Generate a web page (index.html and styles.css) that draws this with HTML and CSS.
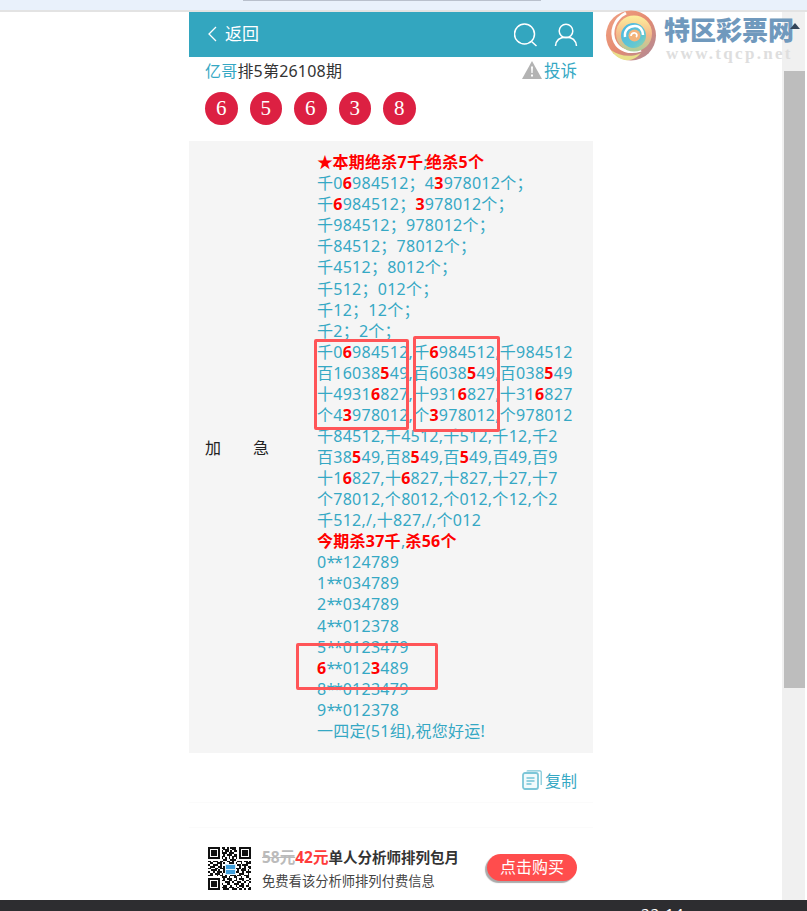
FILE: index.html
```html
<!DOCTYPE html>
<html lang="zh-CN">
	<head>
		<meta charset="utf-8">
		<title>亿哥排5第26108期</title>
		<link rel="stylesheet" href="styles.css">
	</head>
	<body>
		<div class="browser-top"><div class="address-edge"></div></div>

		<div class="window">
			<div class="viewport">
				<div class="column">
					<header class="nav">
						<a class="nav-back">
							<svg class="nav-chevron" viewBox="0 0 10 16"><path d="M9 1 2 8l7 7"/></svg>
							返回
						</a>
						<div class="nav-icons">
							<svg class="nav-icon" viewBox="0 0 24 24"><circle cx="10.5" cy="11" r="10"/><path d="m17.5 18.5 5 4.5"/></svg>
							<svg class="nav-icon" viewBox="0 0 24 24"><circle cx="12" cy="8" r="6.8"/><path d="M1.5 23c.5-6 5-8.8 10.500-8.800S22 17 22.500 23"/></svg>
						</div>
					</header>

					<div class="title-row">
						<div class="title"><span class="teal">亿哥</span>排5第26108期</div>
						<a class="report">
							<svg class="report-icon" viewBox="0 0 20 18"><path d="M10 0 20 18H0z"/><path class="report-mark" d="M9 5.500h2L10.600 12H9.400zM9 13.500h2v2H9z"/></svg>
							投诉
						</a>
					</div>

					<div class="balls">
						<span class="ball">6</span>
						<span class="ball">5</span>
						<span class="ball">6</span>
						<span class="ball">3</span>
						<span class="ball">8</span>
					</div>

					<section class="panel">
						<div class="panel-label">加　　急</div>
						<div class="panel-text">
							<b class="hot star">★</b><b class="hot">本期绝杀7千</b><small class="thin-semi">;</small><b class="hot">绝杀5个</b><br>
							千0<b class="hot">6</b>984512；4<b class="hot">3</b>978012个；<br>
							千<b class="hot">6</b>984512；<b class="hot">3</b>978012个；<br>
							千984512；978012个；<br>
							千84512；78012个；<br>
							千4512；8012个；<br>
							千512；012个；<br>
							千12；12个；<br>
							千2；2个；<br>
							千0<b class="hot">6</b>984512,千<b class="hot">6</b>984512,千984512<br>
							百16038<b class="hot">5</b>49,百6038<b class="hot">5</b>49,百038<b class="hot">5</b>49<br>
							十4931<b class="hot">6</b>827,十931<b class="hot">6</b>827,十31<b class="hot">6</b>827<br>
							个4<b class="hot">3</b>978012,个<b class="hot">3</b>978012,个978012<br>
							千84512,千4512,千512,千12,千2<br>
							百38<b class="hot">5</b>49,百8<b class="hot">5</b>49,百<b class="hot">5</b>49,百49,百9<br>
							十1<b class="hot">6</b>827,十<b class="hot">6</b>827,十827,十27,十7<br>
							个78012,个8012,个012,个12,个2<br>
							千512,/,十827,/,个012<br>
							<b class="hot">今期杀37千</b><small>,</small><b class="hot">杀56个</b><br>
							0<i class="stars">**</i>124789<br>
							1<i class="stars">**</i>034789<br>
							2<i class="stars">**</i>034789<br>
							4<i class="stars">**</i>012378<br>
							5<i class="stars">**</i>0123479<br>
							<b class="hot">6</b><i class="stars">**</i>012<b class="hot">3</b>489<br>
							8<i class="stars">**</i>0123479<br>
							9<i class="stars">**</i>012378<br>
							一四定(51组),祝您好运!
						</div>
						<div class="mark mark-a"></div>
						<div class="mark mark-b"></div>
						<div class="mark mark-c"></div>
					</section>

					<div class="copy-row">
						<a class="copy">
							<svg class="copy-icon" viewBox="0 0 20 20">
								<path class="copy-back" d="M5 1.500C5 1 5.500.8 6 .8h12c.8 0 1.200.5 1.200 1.200v13"/>
								<rect class="copy-page" x="1" y="3" width="15" height="16" rx="2"/>
								<path class="copy-lines" d="M4.500 8h8M4.500 11h8M4.500 14h5"/>
							</svg>
							复制
						</a>
					</div>
					<div class="rule"></div>

					<div class="promo">
						<svg class="qr" viewBox="0 0 25 25" shape-rendering="crispEdges">
							<path class="qr-finder" d="M0 0h7v7H0zM1 1v5h5V1zM18 0h7v7h-7zM19 1v5h5V1zM0 18h7v7H0zM1 19v5h5v-5z"/>
							<path class="qr-finder" d="M2 2h3v3H2zM20 2h3v3h-3zM2 20h3v3H2z"/>
							<path class="qr-bits" d="M8 .5h2M11 .5h1M13 .5h3M9 1.500h3M14 1.500h2M8 2.500h1M10 2.500h2M13 2.500h1M15 2.500h2M8 3.500h3M12 3.500h3M9 4.500h1M11 4.500h3M15 4.500h2M8 5.500h2M12 5.500h1M14 5.500h3M8 6.500h1M10 6.500h1M12 6.500h1M14 6.500h1M16 6.500h1M9 7.500h2M13 7.500h3M0 8.500h2M3 8.500h3M7 8.500h2M11 8.500h2M14 8.500h1M17 8.500h3M21 8.500h2M24 8.500h1M1 9.500h2M5 9.500h3M9 9.500h1M12 9.500h3M16 9.500h1M19 9.500h1M22 9.500h3M0 10.500h1M3 10.500h3M7 10.500h1M10 10.500h2M17 10.500h2M20 10.500h3M1 11.500h3M6 11.500h2M9 11.500h1M18 11.500h1M21 11.500h1M23 11.500h2M0 12.500h2M4 12.500h2M7 12.500h3M16 12.500h3M20 12.500h2M24 12.500h1M2 13.500h3M6 13.500h1M9 13.500h1M17 13.500h1M19 13.500h3M23 13.500h1M0 14.500h1M3 14.500h1M5 14.500h3M9 14.500h2M16 14.500h2M20 14.500h1M22 14.500h3M1 15.500h2M4 15.500h3M8 15.500h1M11 15.500h3M15 15.500h1M18 15.500h3M23 15.500h1M0 16.500h3M5 16.500h1M7 16.500h2M10 16.500h1M13 16.500h3M17 16.500h2M21 16.500h3M8 17.500h3M12 17.500h1M15 17.500h2M19 17.500h1M22 17.500h2M9 18.500h1M11 18.500h3M16 18.500h1M18 18.500h3M24 18.500h1M8 19.500h2M12 19.500h2M15 19.500h2M20 19.500h1M22 19.500h2M10 20.500h3M14 20.500h1M17 20.500h2M21 20.500h1M24 20.500h1M8 21.500h1M11 21.500h2M15 21.500h3M19 21.500h2M23 21.500h1M9 22.500h2M13 22.500h1M16 22.500h1M18 22.500h3M22 22.500h2M8 23.500h3M12 23.500h3M17 23.500h1M20 23.500h1M24 23.500h1M9 24.500h2M11 24.500h1M14 24.500h3M18 24.500h2M21 24.500h1M23 24.500h2"/>
							<rect class="qr-logo" x="10" y="10" width="6" height="6"/>
							<path class="qr-logo-line" d="M10.500 11.500h5M10.500 14.500h5"/>
						</svg>
						<div class="promo-text">
							<div class="promo-head"><s class="old-price">58元</s><span class="new-price">42元</span>单人分析师排列包月</div>
							<div class="promo-sub">免费看该分析师排列付费信息</div>
						</div>
						<a class="buy">点击购买</a>
					</div>
				</div>
			</div>

			<div class="scrollbar"><div class="scroll-thumb"></div></div>

			<div class="watermark">
				<svg class="swirl" viewBox="0 0 52 52">
					<defs>
						<linearGradient id="swirlOuter" x1="0" y1="0" x2="1" y2="1">
							<stop offset="0" stop-color="#f0a486"/>
							<stop offset=".5" stop-color="#e58a70"/>
							<stop offset="1" stop-color="#a98a9c"/>
						</linearGradient>
						<linearGradient id="swirlBand" x1="0" y1="0" x2="0" y2="1">
							<stop offset="0" stop-color="#fdf09c"/>
							<stop offset=".55" stop-color="#f5b98a"/>
							<stop offset="1" stop-color="#a9cf9a"/>
						</linearGradient>
						<linearGradient id="swirlCore" x1="0" y1="0" x2="1" y2="1">
							<stop offset="0" stop-color="#48b6e4"/>
							<stop offset=".7" stop-color="#63c7d2"/>
							<stop offset="1" stop-color="#9ed39a"/>
						</linearGradient>
					</defs>
					<circle cx="26" cy="25.500" r="25" fill="url(#swirlOuter)"/>
					<path d="M6 40c8 6 20 8 30 3-4 5-10 8-16 7-6-1-11-5-14-10z" fill="#e9e08a"/>
					<path class="swirl-gap" d="M21 3C9 9 5 22 10 32c4 8 14 12 26 8"/>
					<circle cx="29" cy="23.500" r="18" fill="url(#swirlBand)"/>
					<circle cx="28.500" cy="25.500" r="12.500" fill="url(#swirlCore)"/>
					<path class="swirl-arc" d="M20 27c-1-7 4-11 10-11 5 0 8 4 8 9"/>
					<circle cx="29.500" cy="25.500" r="6" fill="#f3b47c"/>
					<path class="swirl-hook" d="M26 26c0-2 2-3.500 4-3 2 .5 2.500 3 1 4"/>
				</svg>
				<div class="watermark-text">
					<div class="watermark-name">特区彩票网</div>
					<div class="watermark-url">www.tqcp.net</div>
				</div>
			</div>
			<div class="scroll-arrow"></div>
		</div>

		<footer class="taskbar"><span class="clock">22:14</span></footer>
	</body>
</html>
```

FILE: styles.css
```css
* {
	box-sizing: border-box;
}
html, body {
	margin: 0;
	height: 911px;
	overflow: hidden;
}
body {
	display: flex;
	flex-direction: column;
	background-color: #fff;
	font-family: "Noto Sans", "Noto Sans CJK SC", sans-serif;
	font-size: 16px;
	color: #333;
}
a {
	color: inherit;
	text-decoration: none;
}

/* browser chrome */
.browser-top {
	height: 12px;
	flex: none;
	background-color: #e9f1fb;
	border-bottom: 2px solid #e3e3e3;
	padding-left: 243px;
}
.address-edge {
	width: 298px;
	height: 1px;
	background-color: #b9c0cc;
}
.window {
	flex: 1;
	display: flex;
	position: relative;
	min-height: 0;
}
.viewport {
	flex: 1;
	display: flex;
	justify-content: center;
}
.scrollbar {
	flex: none;
	width: 25px;
	background-color: #f0f0f0;
	border-right: 2px solid #fff;
	padding: 59px 0 0 2px;
}
.scroll-thumb {
	height: 617px;
	background-color: #bdbdbd;
}
.scroll-arrow {
	position: absolute;
	top: 11px;
	right: 7px;
	border-left: 5.500px solid transparent;
	border-right: 5.500px solid transparent;
	border-bottom: 6px solid #34465a;
}
.taskbar {
	flex: none;
	height: 11px;
	background-color: #2d2d30;
	overflow: hidden;
	padding-left: 641px;
}
.clock {
	display: block;
	margin-top: 3px;
	font-size: 15px;
	line-height: 20px;
	letter-spacing: 1px;
	color: #fff;
}

/* page column */
.column {
	width: 404px;
}
.nav {
	height: 45px;
	background-color: #33a6bf;
	display: flex;
	align-items: center;
	justify-content: space-between;
	padding: 0 15px 0 18px;
	color: #fff;
}
.nav-back {
	display: flex;
	align-items: center;
	gap: 8px;
	font-size: 17px;
	line-height: 22px;
	padding-bottom: 2px;
}
.nav-chevron {
	width: 10px;
	height: 16px;
	fill: none;
	stroke: #fff;
	stroke-width: 1.300;
}
.nav-icons {
	display: flex;
	gap: 16px;
}
.nav-icon {
	width: 24px;
	height: 24px;
	fill: none;
	stroke: #fff;
	stroke-width: 1.500;
}
.title-row {
	height: 28px;
	display: flex;
	align-items: center;
	justify-content: space-between;
	padding: 0 16px 2px 16px;
}
.title {
	letter-spacing: .2px;
}
.teal {
	color: #35a8c4;
}
.report {
	display: flex;
	align-items: center;
	gap: 2px;
	font-size: 16.500px;
	color: #35a8c4;
}
.report-icon {
	width: 20px;
	height: 18px;
	fill: #b3b3b3;
}
.report-mark {
	fill: #fff;
}
.balls {
	display: flex;
	gap: 12px;
	padding: 7px 0 0 16px;
}
.ball {
	width: 32.500px;
	height: 33px;
	border-radius: 50%;
	background-color: #dc2042;
	color: #fff;
	font-family: "Liberation Serif", serif;
	font-size: 21px;
	line-height: 33px;
	text-align: center;
}
.panel {
	position: relative;
	display: flex;
	align-items: center;
	height: 612px;
	margin-top: 16px;
	background-color: #f5f5f5;
}
.panel-label {
	width: 128px;
	flex: none;
	padding-left: 16px;
	color: #222;
}
.panel-text {
	line-height: 21.060px;
	letter-spacing: .26px;
	color: #35a8c4;
	white-space: nowrap;
}
.panel-text small {
	font-size: 16px;
}
.panel-text .thin-semi {
	letter-spacing: -1.500px;
}
.star {
	letter-spacing: -2.500px;
	margin-right: 2px;
}
.stars {
	font-style: normal;
	letter-spacing: -1.200px;
	margin-right: 1px;
}
.hot {
	color: #f00;
	font-weight: 700;
}
.mark {
	position: absolute;
	border: 3px solid #ff5558;
	border-radius: 2px;
}
.mark-a {
	left: 125px;
	top: 198px;
	width: 95px;
	height: 91px;
}
.mark-b {
	left: 224px;
	top: 195px;
	width: 87px;
	height: 96px;
}
.mark-c {
	left: 107px;
	top: 502px;
	width: 142px;
	height: 47px;
}

/* below the panel */
.copy-row {
	height: 50px;
	display: flex;
	justify-content: flex-end;
	align-items: flex-end;
	padding: 0 16px 10px 0;
	border-bottom: 1px solid #fbfbfb;
}
.copy {
	display: flex;
	align-items: center;
	gap: 3px;
	color: #35a8c4;
}
.copy-icon {
	width: 20px;
	height: 20px;
	fill: none;
}
.copy-back {
	stroke: #7cc6d8;
	stroke-width: 1.200;
}
.copy-page {
	stroke: #7cc6d8;
	stroke-width: 1.800;
	fill: #f1fafc;
}
.copy-lines {
	stroke: #35a8c4;
	stroke-width: 1.200;
}
.rule {
	height: 25px;
	border-bottom: 1px solid #fbfbfb;
}
.promo {
	display: flex;
	align-items: center;
	padding: 18px 16px 0 19px;
}
.qr {
	width: 43px;
	height: 43px;
	flex: none;
	margin-right: 11px;
}
.qr-finder {
	fill: #111;
	fill-rule: evenodd;
}
.qr-bits {
	fill: none;
	stroke: #111;
	stroke-width: 1;
}
.qr-logo {
	fill: #d8eefa;
}
.qr-logo-line {
	stroke: #3f9fdc;
	stroke-width: 2;
}
.promo-text {
	flex: 1;
}
.promo-head {
	font-size: 14.500px;
	font-weight: 700;
	line-height: 22px;
	color: #333;
	white-space: nowrap;
}
.old-price {
	font-size: 15.500px;
	color: #bbb;
}
.new-price {
	font-size: 15.500px;
	color: #ff3b3b;
}
.promo-sub {
	margin-top: 3px;
	font-size: 13.300px;
	line-height: 20px;
	color: #444;
	white-space: nowrap;
}
.buy {
	width: 90px;
	height: 27px;
	margin-bottom: 2px;
	border-radius: 14px;
	background-color: #ff4d4d;
	box-shadow: -2px 2px 1px #aaa;
	color: #fff;
	font-size: 16px;
	line-height: 27px;
	text-align: center;
}

/* logo stamped over the top corner */
.watermark {
	position: absolute;
	left: 605px;
	top: -2px;
	display: flex;
	gap: 7px;
}
.swirl {
	width: 52px;
	height: 52px;
	flex: none;
}
.swirl-gap {
	fill: none;
	stroke: #fff;
	stroke-width: 3;
}
.swirl-arc {
	fill: none;
	stroke: #fff;
	stroke-width: 2.500;
}
.swirl-hook {
	fill: none;
	stroke: #fff;
	stroke-width: 1.800;
}
.watermark-text {
	padding-top: 3px;
}
.watermark-name {
	font-family: "Noto Sans CJK SC", sans-serif;
	font-size: 26px;
	font-weight: 900;
	line-height: 32px;
	color: #7099bd;
	white-space: nowrap;
}
.watermark-url {
	padding-left: 2px;
	font-family: "Liberation Serif", serif;
	font-size: 17px;
	font-weight: 700;
	line-height: 18px;
	letter-spacing: 2.300px;
	color: #dedede;
	white-space: nowrap;
}
```
